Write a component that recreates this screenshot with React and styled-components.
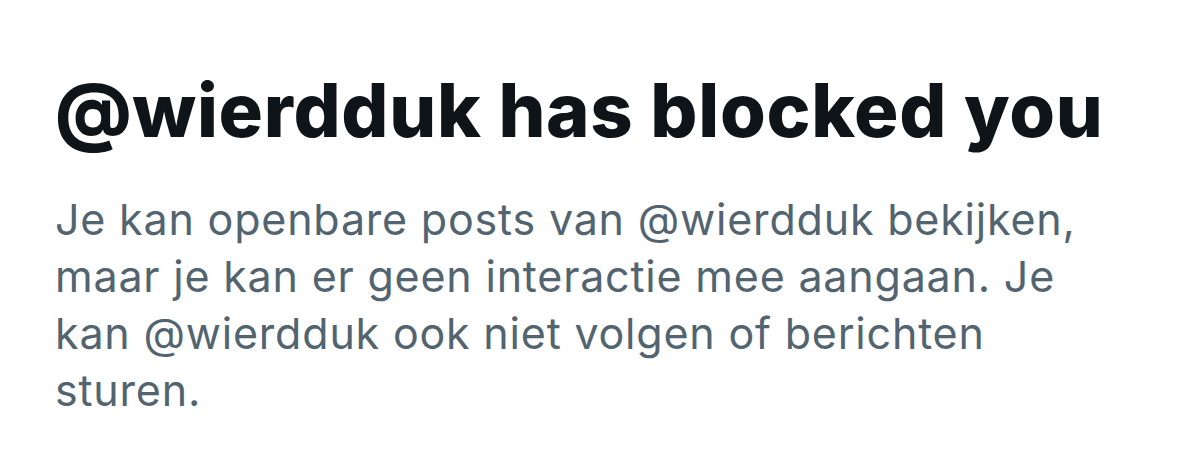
import React from "react";
import styled, { createGlobalStyle } from "styled-components";

const Global = createGlobalStyle`
  html, body { margin: 0; padding: 0; background: #ffffff; }
  body { font-family: Inter, "Noto Sans", sans-serif; -webkit-font-smoothing: antialiased; }
`;

const Notice = styled.section`
  display: flex;
  flex-direction: column;
  gap: 39px;
  padding: 68px 40px 0 55px;
  width: 1179px;
  box-sizing: border-box;
`;

const Title = styled.h1`
  margin: 0;
  font-family: Inter, sans-serif;
  font-weight: 800;
  font-size: 74px;
  line-height: 84px;
  letter-spacing: 0.7px;
  white-space: nowrap;
  color: #0f1419;
`;

const Body = styled.p`
  margin: 0;
  max-width: 1060px;
  font-family: Inter, sans-serif;
  font-weight: 400;
  font-size: 43px;
  line-height: 57px;
  letter-spacing: 0.8px;
  color: #536471;
`;

export default function App() {
  return (
    <>
      <Global />
      <Notice>
        <Title>@wierdduk has blocked you</Title>
        <Body>
          Je kan openbare posts van @wierdduk bekijken, maar je kan er geen
          interactie mee aangaan. Je kan @wierdduk ook niet volgen of berichten
          sturen.
        </Body>
      </Notice>
    </>
  );
}
